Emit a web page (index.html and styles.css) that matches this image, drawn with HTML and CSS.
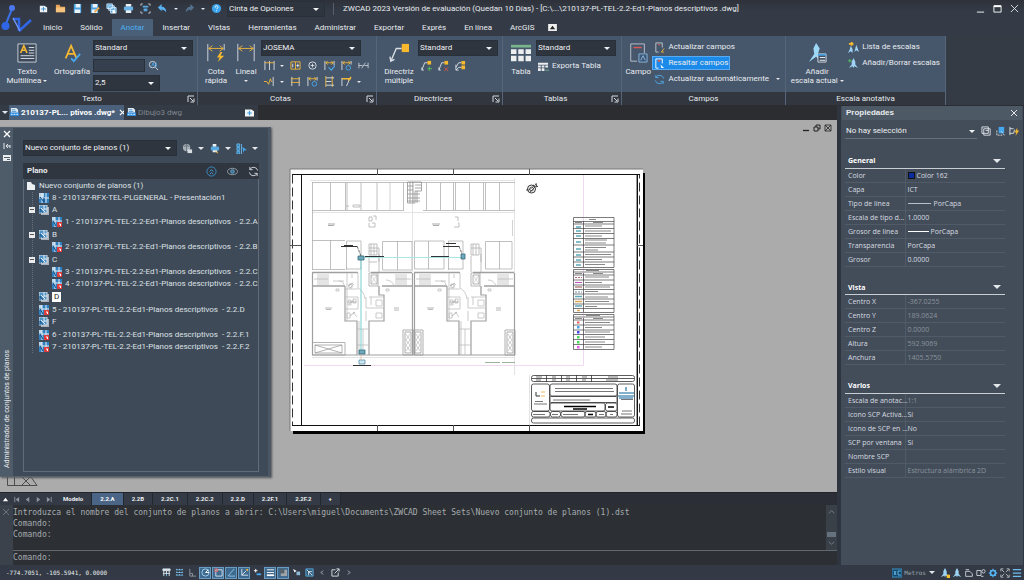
FILE: index.html
```html
<!DOCTYPE html>
<html lang="es">
<head>
<meta charset="utf-8">
<title>ZWCAD 2023</title>
<link rel="stylesheet" href="styles.css">
</head>
<body>
<svg class="defs" aria-hidden="true">
  <defs>
    <symbol id="launch" viewBox="0 0 8 8"><path d="M1 7V1H7M3 3L6 6M7 3.500V7H3.500" fill="none" stroke="#d5dae0"/></symbol>
    <symbol id="sheet" viewBox="0 0 10 10"><rect width="10" height="10" fill="#2f80c0"/><path d="M0 0H5V4H0Z" fill="#bcd7ea"/><path d="M3 0V10M7 0V10M0 5H10" stroke="#e6edf3"/><path d="M1 4L5 9V5" fill="none" stroke="#124a80"/></symbol>
    <symbol id="sheetlock" viewBox="0 0 10 10"><rect width="10" height="10" fill="#2f80c0"/><path d="M0 0H3V3H0Z" fill="#bcd7ea"/><path d="M3 0V10M7 0V5M0 4H10" stroke="#e6edf3"/><path d="M1 4L4 9" stroke="#124a80"/><rect x="5" y="5" width="5" height="5" fill="#e03c3c"/><path d="M7 7H8.500V9" fill="none" stroke="#fff"/></symbol>
    <symbol id="subset" viewBox="0 0 10 10"><path d="M2 2H10V10H2Z" fill="#aab3bd"/><path d="M0 0H8V8H0Z" fill="#4f93c7" stroke="#d5dde4"/><path d="M5 0V5M2 3L6 7M5 4H8" stroke="#e8eef3" fill="none"/><path d="M1 8V4L4 8" fill="none" stroke="#17588f"/></symbol>
    <symbol id="dwg" viewBox="0 0 10 10"><path d="M1 0H7L9 2V7H1Z" fill="#dfeaf3"/><path d="M2 2H6M2 4H7" stroke="#4b94ce"/><rect y="5" width="10" height="4" rx="1" fill="#2d8be0"/><path d="M1 7H3M4 7H6M7 7H9" stroke="#fff"/></symbol>
    <symbol id="dimfix" viewBox="0 0 12 12"><path d="M1 1V11M11 1V5" stroke="#d9dee4"/><path d="M2 3H10M4 1L2 3L4 5M8 1L10 3L8 5" fill="none" stroke="#f0b73a"/><circle cx="8" cy="8.500" r="2.500" fill="none" stroke="#4aa9ea"/></symbol>
    <symbol id="leader" viewBox="0 0 12 12"><path d="M1 11L4 3H7M1 8V11H3" fill="none" stroke="#d9dee4"/><rect x="7" y="1" width="4" height="4" fill="#f6b82c"/></symbol>
    <symbol id="scale" viewBox="0 0 12 12"><path d="M6 0L8 4V7L11 11L7 9L6 11L5 9L1 11L4 7V4Z" fill="#9ed3f3"/></symbol>
    <symbol id="refresh" viewBox="0 0 12 12"><path d="M10.500 5A4.500 4.500 0 0 0 2 4M1.500 7A4.500 4.500 0 0 0 10 8M2 1V4H5M10 11V8H7" fill="none" stroke="currentColor"/></symbol>
    <g id="flat" fill="none" stroke="#b4b4b4" stroke-width=".7">
      <path d="M312 272.500H358M371 272.500H412M312 286H345M382 286H412" stroke="#a0a0a0" stroke-width="1.400"/>
      <path d="M312.500 273V355M345 286V321H357V355M369 355V321H384V295H379V286M412.500 273V355H312" stroke="#a0a0a0" stroke-width="1.200"/>
      <path d="M318 274V285M320 274V285M322 274V285M324 274V285M326 274V285M328 274V285M314 279H328M396 274V285M398 274V285M400 274V285M402 274V285M404 274V285M406 274V285M396 279H411M333 281H344"/>
      <path d="M347 273V321M358 273V288M345 289H358M345 297H358M345 309H358M358 297V309M369 297H384M366 297V308H384M366 311V321M352 274V278M354 284L350 288M354 300L349 304M353 312L357 317M358 288Q364 291 365 299M371 297V305M376 300H382V306H376ZM376 313H382V318H376Z"/>
      <path d="M369 273H378V286H369ZM371 275H377V284H371Z" stroke="#999"/>
      <path d="M371 275L377 284M377 275L371 284" stroke-width=".5"/>
      <path d="M379 286V295M386 280Q392 280 394 286M339 281Q344 281 344 286M336 289H339V291H336ZM386 289H389V291H386Z"/>
      <path d="M349 284H352V288H349ZM348 300H351V305H348ZM353 299H356V303H353ZM347 313H350V318H347Z"/>
      <path d="M348 286L353 283M348 302L356 302M350 316L355 312" stroke="#999"/>
      <path d="M325 308H332M326 309.500H331M394 308H399M394 310H399" stroke="#888" stroke-width=".6"/>
      <path d="M357 329H368M363 329V355M357 345H369M359 321V355"/>
    </g>
    <g id="lift" fill="none" stroke="#9a9a9a" stroke-width=".8"><path d="M403 330H413V355H403ZM405 332H411V353H405Z"/><path d="M406 334L410 340L406 345L410 351M410 334L406 340L410 345L406 351" stroke-width=".5"/></g>
  </defs>
</svg>

<div class="app">
  <header class="top">
    <svg class="logo" viewBox="0 0 34 36" role="img" aria-label="ZWCAD"><path d="M12 9L5 26" stroke="#3b6fe6" stroke-width="2"/><circle cx="12" cy="8" r="3" fill="#4b78ee"/><circle cx="5.500" cy="26" r="4" fill="#2f66e8"/><path d="M13 19H19V31M19 31L31 20" fill="none" stroke="#2f66e8" stroke-width="2.500"/><path d="M13 18L20 31" stroke="#6d96f5" stroke-width="1.500"/></svg>
    <div class="toprows">
      <div class="quick">
        <button class="q" aria-label="Nuevo"><svg viewBox="0 0 12 12"><path d="M2 3H7L10 5V10H2Z" fill="#eef2f5"/><path d="M6 4V9M3.500 6.500H8.500" stroke="#3a8bd0"/></svg></button>
        <button class="q" aria-label="Abrir"><svg viewBox="0 0 12 12"><path d="M1 2H5L6 4H11V10H1Z" fill="#e8a45a"/><path d="M1 5H11V10H1Z" fill="#f5c37e"/></svg></button>
        <button class="q" aria-label="Guardar"><svg viewBox="0 0 12 12"><path d="M2 1H10V11H2Z" fill="#4ba3e2"/><path d="M4 1H9V5H4ZM3 7H9V11H3Z" fill="#eaf3fa"/></svg></button>
        <button class="q" aria-label="Guardar como"><svg viewBox="0 0 12 12"><path d="M2 1H10V11H2Z" fill="#4ba3e2"/><path d="M4 1H9V5H4ZM3 7H9V11H3Z" fill="#eaf3fa"/><path d="M6 10L11 5" stroke="#f0a94b" stroke-width="2"/></svg></button>
        <button class="q" aria-label="Guardar todo"><svg viewBox="0 0 12 12"><path d="M1 1H7V6H1ZM3 3H9V8H3ZM5 5H11V11H5Z" fill="#4b9edb" stroke="#cfe6f7"/><path d="M7 8H10V11H7Z" fill="#fff"/></svg></button>
        <button class="q" aria-label="Imprimir"><svg viewBox="0 0 12 12"><path d="M3 1H9V4H3ZM3 7H9V11H3Z" fill="#e8f0f6"/><path d="M1 4H11V8H1Z" fill="#68b2e8"/></svg></button>
        <button class="q" aria-label="Vista previa"><svg viewBox="0 0 12 12"><path d="M1 3V1H3M9 1H11V3M11 9V11H9M3 11H1V9" fill="none" stroke="#c5ccd3"/><path d="M3 3H9V5H3ZM4 6H8V9H4Z" fill="#5aa7df"/></svg></button>
        <button class="q" aria-label="Deshacer"><svg viewBox="0 0 12 12"><path d="M1 5L5 1V4Q10 4 10 10Q8 7 5 7V9Z" fill="#58b0ef"/></svg></button>
        <i class="caret"></i>
        <button class="q" aria-label="Rehacer"><svg viewBox="0 0 12 12"><path d="M11 5L7 1V4Q2 4 2 10Q4 7 7 7V9Z" fill="#53718c"/></svg></button>
        <i class="caret"></i>
        <button class="q" aria-label="Ayuda"><svg viewBox="0 0 12 12"><circle cx="6" cy="6" r="5" fill="#3ba4ee"/><path d="M4.500 5Q4.500 3 6 3T7.500 5Q7.500 6 6 6.500M6 8V9" fill="none" stroke="#fff"/></svg></button>
        <span class="pick w-ws"><select aria-label="Espacio de trabajo"><option>Cinta de Opciones</option></select></span>
        <i class="bar"></i>
        <h1 class="title">ZWCAD 2023 Versión de evaluación (Quedan 10 Días) - [C:\...\210137-PL-TEL-2.2-Ed1-Planos descriptivos .dwg]</h1>
        <button class="win" aria-label="Minimizar"><svg viewBox="0 0 10 10"><path d="M1 9H9" stroke="#fff"/></svg></button>
        <button class="win" aria-label="Maximizar"><svg viewBox="0 0 10 10"><path d="M1 2H9V9H1Z" fill="none" stroke="#fff"/><path d="M1 2.500H9" stroke="#fff" stroke-width="2"/></svg></button>
        <button class="win" aria-label="Cerrar"><svg viewBox="0 0 10 10"><path d="M1 1L9 9M9 1L1 9" stroke="#e4e7ea"/></svg></button>
      </div>
      <nav class="tabs">
        <a href="#">Inicio</a><a href="#">Sólido</a><a href="#" class="on">Anotar</a><a href="#">Insertar</a><a href="#">Vistas</a><a href="#">Herramientas</a><a href="#">Administrar</a><a href="#">Exportar</a><a href="#">Exprés</a><a href="#">En línea</a><a href="#">ArcGIS</a>
        <button class="fold" aria-label="Contraer"><svg viewBox="0 0 10 8"><path d="M0 0H10V8H0Z" fill="#eee"/><path d="M2 6L5 2L8 6Z" fill="#222"/></svg></button>
      </nav>
    </div>
  </header>

  <section class="ribbon">
    <div class="panel p-text">
      <div class="pbody">
        <button class="big b-multi"><svg viewBox="0 0 22 22"><path d="M1 1H21V21H1Z" fill="#3b4859" stroke="#cfd5db"/><path d="M4 11L7.500 3L11 11M5 8H10" fill="none" stroke="#f2b733" stroke-width="1.800"/><path d="M13 5H19M13 8H19M13 11H19M4 14H19M4 17H19" stroke="#e6eaee"/></svg>Texto<br>Multilínea <i class="caret sm"></i></button>
        <button class="big b-orto"><svg viewBox="0 0 22 22"><path d="M4 17L10 3L16 17M6 12H14" fill="none" stroke="#f2b733" stroke-width="2"/><path d="M10 17L13 20L20 12" fill="none" stroke="#45a8ef" stroke-width="2"/></svg>Ortografía</button>
        <div class="stack">
          <span class="pick w-wide"><select aria-label="Estilo de texto"><option>Standard</option></select></span>
          <span class="find"><input aria-label="Buscar texto"><button class="mini" aria-label="Buscar"><svg viewBox="0 0 12 12"><circle cx="5" cy="5" r="3.500" fill="none" stroke="#d5dde4"/><path d="M8 8L11 11" stroke="#d5dde4"/><path d="M4 7L5.500 3L7 7M9 3V8" fill="none" stroke="#45a8ef"/></svg></button></span>
          <span class="pick w-mid"><select aria-label="Altura"><option>2,5</option></select></span>
        </div>
      </div>
      <div class="pfoot"><span>Texto</span><button aria-label="Opciones de texto"><svg><use href="#launch"/></svg></button></div>
    </div>
    <div class="panel p-cotas">
      <div class="pbody">
        <button class="big b-sm"><svg viewBox="0 0 22 22"><path d="M2 1V20M20 1V8" stroke="#d9dee4"/><path d="M3 6H19M7 3L3 6L7 9M15 3L19 6L15 9" fill="none" stroke="#f0b73a"/><path d="M16 10L12 16H15L13 21L20 14H16L18 10Z" fill="#f6b82c"/></svg>Cota<br>rápida</button>
        <button class="big b-sm"><svg viewBox="0 0 22 22"><path d="M2 1V20M20 1V20" stroke="#d9dee4"/><path d="M3 6H19M7 3L3 6L7 9M15 3L19 6L15 9" fill="none" stroke="#f0b73a"/></svg>Lineal<br><i class="caret sm"></i></button>
        <div class="stack">
          <span class="pick w-wide"><select aria-label="Estilo de cota"><option>JOSEMA</option></select></span>
          <span class="tools">
            <button class="mini" aria-label="Continua"><svg viewBox="0 0 12 12"><path d="M1 1V11M6 1V11M11 1V11" stroke="#d9dee4"/><path d="M1 3H11" stroke="#f0b73a"/></svg></button><i class="caret sm"></i>
            <button class="mini" aria-label="Tolerancia"><svg viewBox="0 0 12 12"><path d="M1 2H11V10H1ZM6 2V10" fill="none" stroke="#f0b73a"/><path d="M3 4V8M7 6H10M8.500 4V8" stroke="#e3e7eb"/></svg></button>
            <button class="mini" aria-label="Marca de centro"><svg viewBox="0 0 12 12"><circle cx="6" cy="6" r="4" fill="none" stroke="#d9dee4"/><path d="M4 6H8M6 4V8" stroke="#d9dee4"/></svg></button>
            <button class="mini" aria-label="Inspección"><svg viewBox="0 0 12 12"><path d="M1 1V11M11 1V6" stroke="#d9dee4"/><path d="M2 3H10M4 1L2 3L4 5M8 1L10 3L8 5" fill="none" stroke="#f0b73a"/><path d="M5 8L8 11L12 6" fill="none" stroke="#4aa9ea" stroke-width="1.300"/></svg></button>
            <button class="mini" aria-label="Actualizar"><svg><use href="#dimfix"/></svg></button>
            <button class="mini" aria-label="Corte"><svg viewBox="0 0 12 12"><path d="M1 3V9M11 3V9M1 6H5M7 6H11M4 9L8 3" stroke="#c4cad1"/></svg></button>
          </span>
          <span class="tools">
            <button class="mini" aria-label="Recodo"><svg viewBox="0 0 12 12"><path d="M0 6H3L5 9L7 3L8 6H9" fill="none" stroke="#f0b73a"/><path d="M10 1V11" stroke="#d9dee4"/></svg></button><i class="caret sm"></i>
            <button class="mini" aria-label="Espaciar"><svg viewBox="0 0 12 12"><path d="M2 1V11M10 1V11" stroke="#d9dee4"/><path d="M1 3H11M1 7H11" stroke="#f0b73a"/></svg></button>
            <button class="mini" aria-label="Girar texto"><svg><use href="#dimfix"/></svg></button>
            <button class="mini" aria-label="Justificar"><svg viewBox="0 0 12 12"><path d="M2 0V12M9 0V12" stroke="#f0b73a"/><path d="M2 2H11M2 6H8M2 10H11" stroke="#d9dee4"/></svg></button>
            <button class="mini" aria-label="Oblicua"><svg viewBox="0 0 12 12"><path d="M1 11V2M6 11L10 2" stroke="#d9dee4"/><path d="M1 3H11M8 5L11 1" stroke="#f0b73a" stroke-width="1.500"/></svg></button><i class="caret sm"></i>
          </span>
        </div>
      </div>
      <div class="pfoot"><span>Cotas</span><button aria-label="Opciones de cotas"><svg><use href="#launch"/></svg></button></div>
    </div>
    <div class="panel p-dir">
      <div class="pbody">
        <button class="big b-dir"><svg viewBox="0 0 22 22"><path d="M2 20L8 6H14M1 15L2 20L6 18" fill="none" stroke="#d9dee4" stroke-width="1.500"/><path d="M14 1H22V10H14Z" fill="#f6b82c"/></svg>Directriz<br>múltiple</button>
        <div class="stack">
          <span class="pick w-dir"><select aria-label="Estilo de directriz"><option>Standard</option></select></span>
          <span class="tools">
            <button class="mini" aria-label="Añadir directriz"><svg viewBox="0 0 12 12"><use href="#leader"/><path d="M9 7V12M7 9.500H12" stroke="#55c25b"/></svg></button>
            <button class="mini" aria-label="Eliminar directriz"><svg viewBox="0 0 12 12"><use href="#leader"/><path d="M7 8L11 12M11 8L7 12" stroke="#d95745"/></svg></button>
            <button class="mini" aria-label="Alinear directrices"><svg viewBox="0 0 12 12"><path d="M1 8L4 3H7M1 11L4 8H7M1 5V11H4" fill="none" stroke="#d9dee4"/><path d="M7 1H11V5H7ZM7 6H11V10H7Z" fill="#f6b82c"/></svg></button>
          </span>
        </div>
      </div>
      <div class="pfoot"><span>Directrices</span><button aria-label="Opciones de directrices"><svg><use href="#launch"/></svg></button></div>
    </div>
    <div class="panel p-tab">
      <div class="pbody">
        <button class="big b-tab"><svg viewBox="0 0 22 22"><path d="M0 2H22V5H0Z" fill="#78b58b"/><path d="M0 7H6V12H0ZM8 7H14V12H8ZM16 7H22V12H16ZM0 14H6V20H0ZM8 14H14V20H8ZM16 14H22V20H16Z" fill="#eceef0"/></svg>Tabla</button>
        <div class="stack">
          <span class="pick w-dir"><select aria-label="Estilo de tabla"><option>Standard</option></select></span>
          <button class="line"><svg viewBox="0 0 12 12"><path d="M0 2H11V4H0ZM0 5H3V7H0ZM4 5H7V7H4ZM8 5H11V7H8ZM0 8H3V11H0ZM4 8H7V11H4Z" fill="#eceef0"/><path d="M8 10H12" stroke="#78b58b"/></svg>Exporta Tabla</button>
        </div>
      </div>
      <div class="pfoot"><span>Tablas</span><button aria-label="Opciones de tablas"><svg><use href="#launch"/></svg></button></div>
    </div>
    <div class="panel p-campo">
      <div class="pbody">
        <button class="big b-campo"><svg viewBox="0 0 22 22"><path d="M10 20H3V1H18V11" fill="none" stroke="#c0c7cf"/><path d="M6 5H15" stroke="#e05a55" stroke-width="1.500"/><path d="M12 12H21V21H12Z" fill="#3d5878" stroke="#8eb9dc"/><path d="M14 19L16.500 14L19 19" fill="none" stroke="#8eb9dc"/></svg>Campo</button>
        <div class="stack lines">
          <button class="line"><svg viewBox="0 0 12 12"><path d="M5 11H2V1H9V6" fill="none" stroke="#c0c7cf"/><path d="M4 3H7" stroke="#e05a55"/><path d="M11 7L8 11H11" fill="none" stroke="#f0b73a"/></svg>Actualizar campos</button>
          <button class="line hot"><svg viewBox="0 0 12 12"><path d="M5 11H2V1H9V6" fill="none" stroke="#fff"/><path d="M4 3H7" stroke="#e05a55" stroke-width="2"/><path d="M7 7L11 11H8Z" fill="#fff"/></svg>Resaltar campos</button>
          <button class="line blue"><svg><use href="#refresh"/></svg><span>Actualizar automáticamente</span><i class="caret"></i></button>
        </div>
      </div>
      <div class="pfoot"><span>Campos</span></div>
    </div>
    <div class="panel p-esc">
      <div class="pbody">
        <button class="big b-esc"><svg viewBox="0 0 22 22"><path d="M10 0L14 6L12 12L15 20L10 15L2 21L8 12L7 6Z" fill="#9ed8f7"/><path d="M12 12H21V21H12Z" fill="#405063" stroke="#d9dee4"/><path d="M12 13H21" stroke="#4ba3e2" stroke-width="2"/><path d="M14 16H20M14 19H20" stroke="#fff"/></svg>Añadir<br>escala actual <i class="caret sm"></i></button>
        <div class="stack lines">
          <button class="line"><svg viewBox="0 0 12 12"><path d="M3 4L5 8V12L3 10L0 12L2 8ZM9 3L12 11L9 9L7 11Z" fill="#9ed3f3"/><path d="M1 2H6M4 0V4" stroke="#f6b82c" stroke-width="2"/></svg>Lista de escalas</button>
          <button class="line"><svg viewBox="0 0 12 12"><use href="#scale"/><path d="M0 3H4M2 1V5" stroke="#55c25b"/></svg>Añadir/Borrar escalas</button>
        </div>
      </div>
      <div class="pfoot"><span>Escala anotativa</span></div>
    </div>
  </section>

  <main class="work">
    <div class="left">
      <div class="docs">
        <button class="docmenu" aria-label="Lista de dibujos"><i class="caret"></i></button>
        <div class="doc on"><svg><use href="#dwg"/></svg><span>210137-PL... ptivos .dwg*</span><button aria-label="Cerrar dibujo"><svg viewBox="0 0 8 8"><path d="M1 1L7 7M7 1L1 7" stroke="#fff" stroke-width="1.300"/></svg></button></div>
        <div class="doc"><svg><use href="#dwg"/></svg><span>Dibujo3 dwg</span></div>
        <button class="docnew" aria-label="Nuevo dibujo"><svg viewBox="0 0 10 8"><path d="M0 0H7L10 2V8H0Z" fill="#f2f5f8"/><path d="M5 1.500V6.500M2.500 4H7.500" stroke="#3a9ae6" stroke-width="1.300"/></svg></button>
      </div>

      <div class="canvas">
        <svg class="drawing" viewBox="0 120 837 372" preserveAspectRatio="xMinYMin meet" role="img" aria-label="Plano 2.2.A">
          <path d="M293 173H645V434H293Z" fill="#000"/>
          <path d="M290 169H643V431H290Z" fill="#fff"/>
          <path d="M290 431V169H643" fill="none" stroke="#777"/>
          <path d="M292.500 174.500V425.500H639.500V174.500Z" fill="none" stroke="#333" stroke-dasharray="9 4"/>
          <path d="M301.500 174.500H637.500V425.500H301.500Z" fill="none" stroke="#111"/>
          <path d="M292 174.500H640M292 425.500H640" stroke="#111"/>
          <path d="M377.500 169V175M453.500 169V175M529.500 169V175M290 245.500H301M637 245.500H643M377.500 425V431M453.500 425V431M529.500 425V431" stroke="#555"/>
          <path d="M636.500 175V425" stroke="#999"/>
          <path d="M304 365.500H583.500V175" fill="none" stroke="#f0daf0"/>
          <path d="M514.500 178V375M412.500 180V272M310 180.500H515M312 212.500H515M312 357.500H515M529.500 375V425" fill="none" stroke="#e4e4e4"/>
          <g fill="none" stroke="#b0b0b0" stroke-width=".8">
            <path d="M312.500 182V270M312 182.500H515M312 210.500H404M423 210.500H515M330.500 183V210M345.500 183V210M347 183V210M361 183V210M377 183V210M403.500 183V210M426.500 183V210M440.500 183V210M453.500 183V210M455.500 183V210M469.500 183V210M483.500 183V210M485.500 183V210M499.500 183V210"/>
            <path d="M390 183V210M512.500 220V236" stroke="#c8c8c8"/>
            <path d="M312 240.500H345M312 269.500H345M330.500 240V269M346.500 270V241H361V269H346M382.500 241.500H412M382.500 241.500V270H412V241M397.500 241V270M414.500 241H444V269H414.500ZM428.500 241V269M448.500 270V241H463V269H448M485.500 241.500H512V269H485.500ZM499.500 241V269"/>
            <path d="M407.500 182H421.500V191H415V203H407.500ZM410 182V203M413 182V203M415 185H421M415 188H421M407 186H413M407 190H413M407 194H420M407 198H420M407 201H420M417 191V203" stroke="#929292"/>
            <path d="M369 244H377V255H369ZM371 244V255M374 244V255M369 248H379V262M369 251H377M369 262H377M471 244H479V255H471ZM473 244V255M476 244V255M471 248H481V262M369 256V272M471 256V272"/>
            <path d="M369 217H372V221H369ZM372 223H375V227H369V223M373 216H376V220M455 217H458V221M458 223H459V227H454M353 205H360V207H353ZM346 206H349"/>
            <path d="M379 254V272M481 254V272"/>
          </g>
          <path d="M328 224H335M328 225.500H334M432 224H440M433 225.500H439" stroke="#888" stroke-width=".7"/>
          <use href="#flat"/><use href="#flat" x="102"/>
          <use href="#lift"/><use href="#lift" x="10"/><use href="#lift" x="102"/>
          <path d="M312.500 342.500H345V355H312.500ZM315 345L342 353M315 353L342 345M315 345H342V353H315Z" fill="none" stroke="#a0a0a0" stroke-width=".8"/>
          <path d="M516 271H526V357H516Z" fill="#fff"/>
          <path d="M361 258V352" stroke="#72cfcb" fill="none"/>
          <path d="M361 257.500H463" stroke="#a9e6e4"/>
          <path d="M358 256H364V260H358ZM461 254H465V259H461ZM359 350H365V354H359Z" fill="#6fa8ba" stroke="#396a7e" stroke-width=".8"/>
          <path d="M359 360H365V364H359Z" fill="#cce6f0" stroke="#5b8fa5" stroke-width=".8"/>
          <path d="M361 360V355" stroke="#e4a58a" stroke-width=".6"/>
          <path d="M341 246.500H357M365 256.500H384M431 256.500H449M443 246.500H459M446 243.500H456M344 245.500H353M353 365.500H371" fill="none" stroke="#333"/>
          <path d="M357 246L361 256M459 246L462 254" stroke="#444" stroke-width=".8" stroke-dasharray="3 1"/>
          <path d="M485 362.500H500M502 362.500H515" stroke="#9cb29c"/>
          <g fill="none" stroke="#333"><circle cx="531.500" cy="189" r="4"/><circle cx="531.500" cy="189" r="2" stroke-width=".7"/><path d="M526 190H529L534 186M530 192L535 187M535 184L538 187M536 183L537 187L533 185" stroke-width=".8"/></g>

          <g fill="none" stroke="#444" stroke-width=".7">
            <path d="M573.500 217.500H614V267.500H573.500ZM573.500 269.500H614V312.500H573.500ZM573.500 314.500H614V349.500H573.500ZM583.500 221V267M583.500 273V312M583.500 318V349"/>
            <path d="M573 221.500H614M573 224H614M573 228.500H614M573 233.500H614M573 238.500H614M573 245H614M573 252H614M573 257H614M573 262H614M573 272H614M573 275H614M573 280H614M573 285H614M573 289.500H614M573 294H614M573 299H614M573 304H614M573 308.500H614M573 317H614M573 320H614M573 325H614M573 330H614M573 334.500H614M573 339.500H614M573 344.500H614"/>
          </g>
          <path d="M589 219.500H596M575 222.500H582M593 222.500H603M585 226H602M585 231H611M585 236H602M585 240H607M585 243H606M585 247.500H606M585 250H598M585 254.500H611M585 259.500H602M585 264.500H605M586 270.500H599M575 273.500H582M593 273.500H603M585 277H609M585 282.500H602M585 287H610M585 291.500H598M585 297H608M585 301.500H609M585 306.500H597M586 315.500H600M575 318.500H582M593 318.500H603M585 322.500H610M585 327.500H602M585 332H610M585 337H605M585 342H605M585 347H602" stroke="#888" stroke-width="1.200"/>
          <path d="M576 227H581M576 231H581M576 236H581M576 242H581M576 249H581M576 255H581M576 260H581M576 265H581M575 296.500H582M575 306H582" stroke="#5ea9b6" stroke-width="1.500"/>
          <path d="M575 277.500H582" stroke="#b56a72" stroke-dasharray="2 1"/><path d="M575 282.500H582" stroke="#c44dc4"/><path d="M575 287H582" stroke="#914949"/><path d="M575 292H582" stroke="#718aab" stroke-dasharray="2 1"/><path d="M575 301.500H582M577 310.500H580" stroke="#dda852" stroke-width="1.500"/>
          <path d="M577 321.500H579.500V323.500H577Z" fill="#ec5d68"/><path d="M577 326H579.500V328.500H577Z" fill="#45a6e8"/><path d="M577 331H579.500V333.500H577Z" fill="#4248ed"/><path d="M577 336H579.500V338.500H577ZM577 341H579.500V343.500H577Z" fill="#4ed85f"/><path d="M577 346H579.500V348.500H577Z" fill="#e85ae8"/>

          <g fill="none" stroke="#333" stroke-width=".8">
            <rect x="531.500" y="375.500" width="103" height="6" rx="2"/><path d="M546.500 375V382M561.500 375V382M576.500 375V382M591.500 375V382M532 378.500H634"/>
            <rect x="531.500" y="384" width="18" height="27" rx="2"/><rect x="550" y="384" width="67" height="12" rx="2"/><rect x="550" y="396.500" width="67" height="6" rx="1"/><rect x="550" y="403" width="55" height="8" rx="2"/><rect x="605.500" y="403" width="11.500" height="8" rx="2"/><rect x="617.500" y="384" width="17" height="33" rx="2"/>
            <rect x="531.500" y="411.500" width="18.500" height="5.500" rx="2"/><rect x="550.500" y="411.500" width="10" height="5.500" rx="2"/><rect x="561" y="411.500" width="24" height="5.500" rx="2"/><rect x="585" y="411.500" width="11" height="5.500" rx="2"/><rect x="596" y="411.500" width="10" height="5.500" rx="2"/><rect x="606" y="411.500" width="11" height="5.500" rx="2"/><rect x="531.500" y="418" width="103" height="5" rx="2"/>
          </g>
          <path d="M555 388.500H613M555 391.500H614M553 400H590M535 401.500H543M534 404H547M533 414.500H545M552 414.500H558M563 414.500H578M599 414.500H604M610 414.500H613M536 377H542M552 377H556M566 377H570M582 377H587M608 377H618M536 380H541M552 380H556M566 380H570M582 380H586M606 380H618M622 411H632M621 414H632M621 399.500H633" stroke="#777"/>
          <path d="M564 406.500H596M573 409H587M608 407H614M588 414.500H593" stroke="#000" stroke-width="1.500"/>
          <path d="M536 392V396H540" fill="none" stroke="#333"/><path d="M541 392H545M541 396H545" stroke="#efb95e"/>
          <path d="M619 393H634M618 396H634M619 398H633M626 387V391" stroke="#5b96bc" stroke-width="1.600"/>
          <path d="M7.500 477V485.500H37L31 477M14.500 477V485M22 477L30 485M30 477L22 485" fill="none" stroke="#333" stroke-width=".8"/>
        </svg>
        <div class="mdi">
          <button aria-label="Minimizar plano"><svg viewBox="0 0 8 8"><path d="M1 6.500H7" stroke="#222" stroke-width="1.300"/></svg></button>
          <button aria-label="Restaurar plano"><svg viewBox="0 0 8 8"><path d="M1 3H5V7H1ZM3 3V1H7V5H5" fill="none" stroke="#222"/></svg></button>
          <button aria-label="Cerrar plano"><svg viewBox="0 0 8 8"><path d="M1 1L7 7M7 1L1 7M1 1H7V7H1Z" stroke="#222" fill="none" stroke-width=".8"/></svg></button>
        </div>

        <aside class="sheets">
          <div class="grip">
            <button aria-label="Cerrar"><svg viewBox="0 0 8 8"><path d="M1 1L7 7M7 1L1 7" stroke="#fff" stroke-width="1.300"/></svg></button>
            <button aria-label="Ocultar automáticamente"><svg viewBox="0 0 8 8"><path d="M1 1V7M3 4H7M5 2L3 4L5 6M7 3V6" fill="none" stroke="#e2e6ea"/></svg></button>
            <button aria-label="Propiedades"><svg viewBox="0 0 8 8"><path d="M0 1H8V7H0Z" fill="#e9ecef"/><path d="M1 3.500H7M4 5.500H7" stroke="#4d5b6a"/></svg></button>
            <span>Administrador de conjuntos de planos</span>
          </div>
          <div class="sbody">
            <div class="sbar">
              <span class="pick grow"><select aria-label="Conjunto de planos"><option>Nuevo conjunto de planos (1)</option></select></span>
              <button class="mini" aria-label="Publicar"><svg viewBox="0 0 12 12"><circle cx="5" cy="5" r="4" fill="#a9b2bb"/><path d="M2 4Q5 1 8 4M5 1V9" stroke="#65707b" fill="none"/><path d="M6 7H11V11H6Z" fill="#d8dde1"/></svg></button><i class="caret"></i>
              <button class="mini" aria-label="Imprimir planos"><svg viewBox="0 0 12 12"><path d="M4 1H8V4H4ZM4 7H9V10H4Z" fill="#e8f0f6"/><path d="M2 4H11V8H2Z" fill="#58a9e0"/><path d="M7 9L10 11" stroke="#f0b73a"/></svg></button><i class="caret"></i>
              <button class="mini" aria-label="Selecciones"><svg viewBox="0 0 12 12"><path d="M1 1H4V4H1ZM1 5H4V8H1ZM1 9H4V12H1ZM6 1V12" fill="#2d7fb8" stroke="#69b6e8"/><path d="M7 4L12 8L9 8L8 11Z" fill="#45a8ef"/></svg></button><i class="caret"></i>
            </div>
            <div class="shead"><h2>Plano</h2>
              <button class="mini" aria-label="Contraer todo"><svg viewBox="0 0 12 12"><circle cx="6" cy="6" r="5" fill="none" stroke="#3c8fc7"/><path d="M4 6L6 4L8 6M4 9L6 7L8 9" fill="none" stroke="#4aa3dc"/></svg></button>
              <button class="mini" aria-label="Detalles"><svg viewBox="0 0 12 12"><ellipse cx="6" cy="6" rx="5.500" ry="3.500" fill="none" stroke="#9ba5af"/><circle cx="6" cy="6" r="2" fill="#3c7396" stroke="#6ba7ca"/></svg></button>
              <button class="mini wh" aria-label="Actualizar lista"><svg><use href="#refresh"/></svg></button>
            </div>
            <div class="tree">
              <div class="row root"><svg viewBox="0 0 10 10"><path d="M1 1H5L6 3L9 4V9H1Z" fill="#eef1f3"/></svg>Nuevo conjunto de planos (1)</div>
              <ul>
                <li><div class="row"><svg><use href="#sheet"/></svg>8 - 210137-RFX-TEL-PLGENERAL - Presentación1</div></li>
                <li class="grp open"><div class="row"><svg><use href="#subset"/></svg>A</div>
                  <ul><li><div class="row"><svg><use href="#sheetlock"/></svg>1 - 210137-PL-TEL-2.2-Ed1-Planos descriptivos &nbsp;- 2.2.A</div></li></ul></li>
                <li class="grp open"><div class="row"><svg><use href="#subset"/></svg>B</div>
                  <ul><li><div class="row"><svg><use href="#sheetlock"/></svg>2 - 210137-PL-TEL-2.2-Ed1-Planos descriptivos &nbsp;- 2.2.B</div></li></ul></li>
                <li class="grp open"><div class="row"><svg><use href="#subset"/></svg>C</div>
                  <ul><li><div class="row"><svg><use href="#sheetlock"/></svg>3 - 210137-PL-TEL-2.2-Ed1-Planos descriptivos &nbsp;- 2.2.C.1</div></li>
                  <li><div class="row"><svg><use href="#sheetlock"/></svg>4 - 210137-PL-TEL-2.2-Ed1-Planos descriptivos &nbsp;- 2.2.C.2</div></li></ul></li>
                <li class="grp"><div class="row"><svg><use href="#subset"/></svg><mark>D</mark></div></li>
                <li><div class="row"><svg><use href="#sheetlock"/></svg>5 - 210137-PL-TEL-2.2-Ed1-Planos descriptivos &nbsp;- 2.2.D</div></li>
                <li class="grp"><div class="row"><svg><use href="#subset"/></svg>F</div></li>
                <li><div class="row"><svg><use href="#sheetlock"/></svg>6 - 210137-PL-TEL-2.2-Ed1-Planos descriptivos &nbsp;- 2.2.F.1</div></li>
                <li><div class="row"><svg><use href="#sheetlock"/></svg>7 - 210137-PL-TEL-2.2-Ed1-Planos descriptivos &nbsp;- 2.2.F.2</div></li>
              </ul>
            </div>
          </div>
        </aside>
      </div>

      <nav class="layouts">
        <button class="nav" aria-label="Lista"><svg viewBox="0 0 8 8"><path d="M1 6L4 2L7 6Z" fill="#fff"/></svg></button>
        <button class="nav" aria-label="Primero"><svg viewBox="0 0 8 8"><path d="M2 1V7" stroke="#8d959e"/><path d="M7 1V7L3 4Z" fill="#8d959e"/></svg></button>
        <button class="nav" aria-label="Anterior"><svg viewBox="0 0 8 8"><path d="M6 1V7L2 4Z" fill="#8d959e"/></svg></button>
        <button class="nav" aria-label="Siguiente"><svg viewBox="0 0 8 8"><path d="M2 1V7L6 4Z" fill="#8d959e"/></svg></button>
        <button class="nav" aria-label="Último"><svg viewBox="0 0 8 8"><path d="M1 1V7L5 4Z" fill="#8d959e"/><path d="M6 1V7" stroke="#8d959e"/></svg></button>
        <a href="#">Modelo</a><a href="#" class="on">2.2.A</a><a href="#">2.2B</a><a href="#">2.2C.1</a><a href="#">2.2C.2</a><a href="#">2.2.D</a><a href="#">2.2F.1</a><a href="#">2.2F.2</a><a href="#">+</a>
      </nav>

      <section class="cmd">
        <div class="cgrip"><svg viewBox="0 0 8 8"><path d="M1 1L7 7M7 1L1 7" stroke="#69727c"/></svg></div>
        <div class="cmain">
          <div class="clog"><div class="ctext">Introduzca el nombre del conjunto de planos a abrir: C:\Users\miguel\Documents\ZWCAD Sheet Sets\Nuevo conjunto de planos (1).dst<br>Comando:<br>Comando:</div>
            <div class="scroll"><svg viewBox="0 0 8 8"><path d="M1 6L4 3L7 6" fill="none" stroke="#7c858e"/></svg><i></i><svg viewBox="0 0 8 8"><path d="M1 2L4 5L7 2" fill="none" stroke="#7c858e"/></svg></div>
          </div>
          <label class="cline">Comando:<input></label>
        </div>
      </section>
    </div>

    <aside class="props">
      <div class="phead"><h2>Propiedades</h2><button aria-label="Cerrar propiedades"><svg viewBox="0 0 8 8"><path d="M1 1L7 7M7 1L1 7" stroke="#e4e8eb"/></svg></button></div>
      <div class="psel">
        <span class="pick flat"><select aria-label="Selección"><option>No hay selección</option></select></span>
        <button class="mini" aria-label="Alternar selección"><svg viewBox="0 0 12 12"><path d="M1 1H8V8H1ZM3 3H10V10H3ZM5 5H8" fill="none" stroke="#dce1e6"/></svg></button>
        <button class="mini" aria-label="Seleccionar objetos"><svg viewBox="0 0 12 12"><path d="M4 1H10V8H4Z" fill="#45a8ef"/><path d="M2 5V10H8M7 6L11 11" fill="none" stroke="#dce1e6" stroke-dasharray="2 1"/></svg></button>
        <button class="mini" aria-label="Selección rápida"><svg viewBox="0 0 12 12"><path d="M1 1V10M1 3H5M1 8H5L6 4" fill="none" stroke="#dce1e6"/><path d="M9 2L6 7H8L7 11L11 5H9Z" fill="#f6b82c"/></svg></button>
      </div>
      <table class="pt">
        <colgroup><col class="key"><col></colgroup>
        <thead><tr><th colspan="2"><div>General<i class="caret big-c"></i></div></th></tr></thead>
        <tbody>
          <tr><th>Color</th><td><i class="sw"></i>Color 162</td></tr>
          <tr><th>Capa</th><td>ICT</td></tr>
          <tr><th>Tipo de línea</th><td><i class="ln"></i>PorCapa</td></tr>
          <tr><th>Escala de tipo d...</th><td>1.0000</td></tr>
          <tr><th>Grosor de línea</th><td><i class="ln th"></i>PorCapa</td></tr>
          <tr><th>Transparencia</th><td>PorCapa</td></tr>
          <tr><th>Grosor</th><td>0.0000</td></tr>
        </tbody>
      </table>
      <table class="pt">
        <colgroup><col class="key"><col></colgroup>
        <thead><tr><th colspan="2"><div>Vista<i class="caret big-c"></i></div></th></tr></thead>
        <tbody class="dim">
          <tr><th>Centro X</th><td>-367.0255</td></tr>
          <tr><th>Centro Y</th><td>189.0624</td></tr>
          <tr><th>Centro Z</th><td>0.0000</td></tr>
          <tr><th>Altura</th><td>592.9069</td></tr>
          <tr><th>Anchura</th><td>1405.5750</td></tr>
        </tbody>
      </table>
      <table class="pt">
        <colgroup><col class="key"><col></colgroup>
        <thead><tr><th colspan="2"><div>Varios<i class="caret big-c"></i></div></th></tr></thead>
        <tbody>
          <tr class="dim"><th>Escala de anotac...</th><td>1:1</td></tr>
          <tr><th>Icono SCP Activa...</th><td>Sí</td></tr>
          <tr><th>Icono de SCP en ...</th><td>No</td></tr>
          <tr><th>SCP por ventana</th><td>Sí</td></tr>
          <tr><th>Nombre SCP</th><td></td></tr>
          <tr class="dim"><th>Estilo visual</th><td>Estructura alámbrica 2D</td></tr>
        </tbody>
      </table>
    </aside>
  </main>

  <footer class="status">
    <span class="coords">-774.7051, -105.5941, 0.0000</span>
    <div class="toggles">
      <button aria-label="Forzar cursor"><svg viewBox="0 0 10 10"><path d="M1 1H9V3H1ZM2 3V9M5 3V9M8 3V9M1 6H9" stroke="#d9e4ec" fill="#d9e4ec"/><path d="M5 7V9" stroke="#45a8ef"/></svg></button>
      <button aria-label="Rejilla"><svg viewBox="0 0 10 10"><path d="M1 2H9M1 5H9M1 8H9" stroke="#55aeea"/><path d="M2 1V9M5 1V9M8 1V9" stroke="#ccd5dc" stroke-dasharray="1 2"/></svg></button>
      <button aria-label="Orto"><svg viewBox="0 0 10 10"><path d="M2 1V9H9M2 6H5V9" fill="none" stroke="#8e98a3"/></svg></button>
      <button class="on" aria-label="Polar"><svg viewBox="0 0 10 10"><circle cx="5" cy="5" r="4" fill="none" stroke="#a8d3ef"/><path d="M5 5H9M5 5L8 2" stroke="#fff"/></svg></button>
      <button class="on" aria-label="Referencia"><svg viewBox="0 0 10 10"><path d="M2 2H9V9H2Z" fill="none" stroke="#dce7ef"/><path d="M1 1H4V4H1Z" fill="none" stroke="#e36b66"/></svg></button>
      <button class="on" aria-label="Rastreo"><svg viewBox="0 0 10 10"><path d="M1 9L8 1M2 9H9" stroke="#8fcbf1"/></svg></button>
      <button class="on" aria-label="SCP dinámico"><svg viewBox="0 0 10 10"><path d="M2 1V8H9M2 8L7 3" fill="none" stroke="#dce7ef"/><path d="M6 1H9V4Z" fill="#f0b73a"/></svg></button>
      <button aria-label="Entrada dinámica"><svg viewBox="0 0 10 10"><path d="M1 3H5M3 1V5" stroke="#fff"/><path d="M4 7H9" stroke="#45a8ef" stroke-width="2"/></svg></button>
      <button class="on" aria-label="Grosor"><svg viewBox="0 0 10 10"><path d="M1 2H9M1 5H9" stroke="#fff"/><path d="M1 8H9" stroke="#fff" stroke-width="2"/></svg></button>
      <button class="on" aria-label="Transparencia"><svg viewBox="0 0 10 10"><path d="M2 2H9V9H2Z" fill="#a1a5a9"/><path d="M1 1H6V6H1Z" fill="#57626d"/></svg></button>
      <button aria-label="Ciclo"><svg viewBox="0 0 10 10"><path d="M1 1L5 3L3 5Z" fill="#fff"/><path d="M5 4H9V8H5Z" fill="#8eb9d4"/></svg></button>
      <button aria-label="Anotación"><svg viewBox="0 0 10 10"><path d="M1 1H9V9H1Z" fill="#2e5878" stroke="#5eaee0"/><path d="M2 2L8 8M4 4H8M4 4V8" stroke="#dce7ef"/></svg></button>
      <button aria-label="Anterior"><svg viewBox="0 0 10 10"><path d="M6 3L3 5L6 7" fill="none" stroke="#9aa3ac"/></svg></button>
      <button aria-label="Ventana"><svg viewBox="0 0 10 10"><path d="M5 2H1V9H8V5M4 6L9 1M6 1H9V4" fill="none" stroke="#e1e5e8"/></svg></button>
      <button aria-label="Siguiente"><svg viewBox="0 0 10 10"><path d="M4 3L7 5L4 7" fill="none" stroke="#9aa3ac"/></svg></button>
    </div>
    <div class="units">
      <svg viewBox="0 0 10 10"><path d="M0 1H10V9H0Z" fill="#174767" stroke="#3791c7"/><path d="M2 3L4 7M4 3L2 7M9 3H6V7H9" stroke="#5db5e9" fill="none"/></svg>
      <span>Metros</span><i class="caret"></i>
      <button aria-label="Escala de anotación"><svg viewBox="0 0 12 12"><use href="#scale"/><path d="M8 8H12V12H8Z" fill="#f6c32c"/></svg></button>
      <button aria-label="Visibilidad"><svg><use href="#scale"/></svg></button>
      <button aria-label="Bloquear"><svg viewBox="0 0 12 12"><path d="M2 10V4H7L10 7V10ZM2 2H6" fill="none" stroke="#d9dee4"/></svg></button>
      <button aria-label="Aislar"><svg viewBox="0 0 12 12"><path d="M1 3H6V9H1ZM6 10H9" fill="none" stroke="#d9dee4"/><circle cx="9" cy="4" r="2" fill="none" stroke="#d9dee4"/></svg></button>
      <button aria-label="Configuración"><svg viewBox="0 0 12 12"><circle cx="6" cy="6" r="3" fill="none" stroke="#55b4f3" stroke-width="2"/><path d="M6 1V3M6 9V11M1 6H3M9 6H11M2.500 2.500L4 4M8 8L9.500 9.500M9.500 2.500L8 4M4 8L2.500 9.500" stroke="#55b4f3" stroke-width="1.500"/></svg></button>
      <button aria-label="Pantalla completa"><svg viewBox="0 0 12 12"><path d="M1 4V1H4M8 1H11V4M11 8V11H8M4 11H1V8M2 2L5 5M10 2L7 5M10 10L7 7M2 10L5 7" fill="none" stroke="#c5cbd1"/></svg></button>
      <button aria-label="Menú"><svg viewBox="0 0 12 12"><path d="M1 2H11M1 6H11M1 10H11" stroke="#6dbdf0" stroke-width="1.500"/></svg></button>
    </div>
  </footer>
</div>
</body>
</html>
```

FILE: styles.css
```css
* { box-sizing: border-box; }
body { margin: 0; background: #2b2e34; color: #e9ecef; font: 8px/10px Roboto, "Open Sans", sans-serif; }
button { display: inline-flex; align-items: center; justify-content: center; margin: 0; padding: 0; border: 0; background: none; color: inherit; font: inherit; }
a { color: inherit; text-decoration: none; }
svg { display: block; flex: none; }
ul { list-style: none; margin: 0; padding: 0; }
h1, h2 { margin: 0; font: inherit; }
.defs { position: absolute; width: 0; height: 0; }
.app { display: flex; flex-direction: column; min-height: 100vh; }

.caret { flex: none; display: inline-block; border: 3px solid transparent; border-top-color: #e4e7eb; border-bottom: 0; }
.caret.sm { border-width: 2px; border-bottom: 0; vertical-align: middle; }
.mini { width: 12px; height: 12px; flex: none; }
.mini svg { width: 11px; height: 11px; }

.pick { position: relative; display: flex; background: #2f353f; border: 1px solid #29303a; }
.pick::after { content: ""; position: absolute; right: 5px; top: 50%; margin-top: -1px; border: 3px solid transparent; border-top-color: #f0f2f4; border-bottom: 0; pointer-events: none; }
.pick select { appearance: none; width: 100%; height: 14px; padding: 0 12px 0 1px; border: 0; background: none; color: #eef0f2; font: inherit; }
.w-ws { width: 98px; margin-left: 2px; }
.w-wide { width: 100px; }
.w-mid { width: 67px; }
.w-dir { width: 80px; }

.top { display: flex; height: 36px; background: linear-gradient(#2e3139, #343b46 30%); }
.logo { width: 34px; height: 36px; }
.toprows { flex: 1; display: flex; flex-direction: column; }
.quick { display: flex; align-items: center; height: 19px; padding: 0 1px 2px; }
.quick .q { width: 17px; height: 14px; }
.quick .q svg { width: 11px; height: 11px; }
.quick .caret { margin: 0 3px; border-width: 2px; border-bottom: 0; }
.bar { width: 1px; height: 12px; margin: 0 9px 0 8px; background: #59606a; }
.title { flex: 1; white-space: nowrap; }
.win { width: 17px; height: 14px; }
.win svg { width: 9px; height: 9px; }
.tabs { display: flex; height: 17px; }
.tabs a { padding: 4px 9px 0; line-height: 10px; }
.tabs a.on { background: #4a6078; color: #4cb0f5; }
.fold { margin-left: 5px; }
.fold svg { width: 9px; height: 7px; }

.ribbon { display: flex; background: #343b45; }
.panel { border-right: 1px solid #56657a; display: flex; flex-direction: column; }
.p-text { width: 198px; }
.p-cotas { width: 179px; }
.p-dir { width: 126px; }
.p-tab { width: 119px; }
.p-campo { width: 164px; }
.p-esc { width: 160px; }
.pbody { display: flex; align-items: flex-start; height: 56px; padding: 4px 3px 0; background: #46566b; }
.pfoot { display: flex; align-items: center; height: 13px; background: #31363f; }
.pfoot span { flex: 1; text-align: center; }
.pfoot button { width: 13px; height: 12px; }
.pfoot svg { width: 8px; height: 8px; }
.big { display: block; padding-top: 3px; line-height: 9px; text-align: center; white-space: nowrap; }
.big svg { width: 20px; height: 20px; margin: 0 auto 4px; }
.b-multi { width: 48px; }
.b-orto { width: 42px; }
.b-sm { width: 30px; }
.b-dir { width: 38px; }
.b-tab { width: 30px; }
.b-campo { width: 30px; }
.b-esc { width: 58px; }
.stack { display: flex; flex-direction: column; align-items: flex-start; gap: 3px; }
.lines { gap: 2px; margin-left: 1px; }
.find { display: flex; align-items: center; gap: 2px; }
.find input { width: 52px; height: 13px; border: 1px solid #29303a; background: #353f4d; padding: 0 2px; color: inherit; font: inherit; }
.tools { display: flex; align-items: center; gap: 5px; height: 13px; padding-left: 2px; }
.line { gap: 3px; height: 14px; padding: 0 2px; white-space: nowrap; }
.line svg { width: 11px; height: 11px; }
.line.hot { background: #1b8ae8; outline: 1px solid #58aaf2; outline-offset: -1px; }
.line.blue svg { color: #4fa9e6; }
.line .caret { margin-left: 4px; border-width: 2px; border-bottom: 0; }

.work { flex: 1; display: flex; }
.left { flex: 1; min-width: 0; display: flex; flex-direction: column; }
.docs { display: flex; height: 15px; background: #2b2d31; }
.docmenu { width: 9px; background: #343b45; }
.doc { display: flex; align-items: center; gap: 2px; width: 117px; padding: 0 3px; background: #353b44; color: #7f868f; }
.doc > svg { width: 9px; height: 9px; }
.doc.on { width: 115px; padding: 0 1px; background: #4b607b; color: #fff; font-weight: bold; white-space: nowrap; }
.doc button { margin-left: 2px; }
.doc button svg { width: 7px; height: 7px; }
.docnew { width: 17px; background: #353b44; }
.docnew svg { width: 9px; height: 8px; }

.canvas { flex: 1; position: relative; background: #ababab; }
.drawing { width: 100%; height: auto; }
.mdi { position: absolute; top: 4px; right: 5px; display: flex; gap: 3px; }
.mdi svg { width: 8px; height: 8px; }

.sheets { position: absolute; left: 0; top: 7px; width: 271px; height: 350px; display: flex; background: #3f4a58; border: 1px solid #55616e; border-left: 0; border-right: 3px solid #4b5765; box-shadow: 1px 1px 2px #555; }
.grip { width: 13px; display: flex; flex-direction: column; align-items: center; gap: 4px; padding: 2px 0 8px; background: #4e5b69; }
.grip svg { width: 8px; height: 8px; }
.grip span { margin-top: auto; writing-mode: vertical-rl; transform: rotate(180deg); font-size: 7px; white-space: nowrap; }
.sbody { flex: 1; min-width: 0; display: flex; flex-direction: column; padding: 12px 9px 4px 10px; }
.sbar { display: flex; align-items: center; gap: 4px; }
.sbar .grow { flex: none; width: 154px; }
.sbar .mini { width: 13px; }
.shead { display: flex; align-items: center; gap: 9px; height: 16px; margin-top: 7px; padding-left: 4px; background: #303640; }
.shead h2 { flex: 1; font-weight: bold; }
.shead .wh { color: #d5d9dd; }
.tree { flex: 1; overflow: hidden; padding: 1px 0 0 2px; border: 1px solid #626c78; border-top: 0; white-space: nowrap; color: #dde1e5; }
.row { display: flex; align-items: center; gap: 3px; height: 12px; }
.row svg { width: 10px; height: 10px; }
.tree > ul { margin-left: 6px; padding-left: 6px; border-left: 1px dotted #65707c; }
.tree ul ul { padding-left: 13px; }
.grp { padding-bottom: 1px; }
.grp.open { position: relative; }
.grp.open::before { content: ""; position: absolute; left: -10px; top: 3px; width: 6px; height: 6px; background: linear-gradient(#555, #555) 1px 2px / 4px 1px no-repeat #e9ebed; }
mark { padding: 0 2px; background: #fff; color: #222; }

.layouts { display: flex; height: 13px; background: #2b2e36; border-top: 1px solid #22252b; font: bold 6px/12px Roboto, sans-serif; }
.layouts .nav { width: 11px; background: #343b46; }
.layouts .nav svg { width: 7px; height: 7px; }
.layouts a { min-width: 20px; padding: 0 8px; text-align: center; background: #343b46; border-right: 1px solid #23272e; }
.layouts a.on { background: #4b6586; color: #fff; }

.cmd { display: flex; height: 60px; background: #2c3034; color: #a6abb0; font: 8px/11px "DejaVu Sans Mono", monospace; }
.cgrip { width: 13px; padding: 3px 2px; background: #3c424b; }
.cgrip svg { width: 8px; height: 8px; }
.cmain { flex: 1; min-width: 0; display: flex; flex-direction: column; }
.clog { flex: 1; display: flex; border-bottom: 1px solid #62686e; }
.ctext { flex: 1; padding-top: 2px; }
.scroll { display: flex; flex-direction: column; align-items: center; width: 11px; padding: 3px 0; background: #3a4048; }
.scroll svg { width: 7px; height: 7px; }
.scroll i { width: 9px; height: 5px; margin: auto 0 3px; background: #65717d; }
.cline { display: flex; height: 14px; line-height: 14px; }
.cline input { flex: 1; border: 0; background: none; color: inherit; font: inherit; }

.props { width: 187px; padding: 0 1px; background: #434d59; border-left: 4px solid #2f353e; border-right: 1px solid #2f353e; margin-top: 1px; }
.phead { display: flex; align-items: center; justify-content: space-between; height: 14px; padding: 0 4px 0 4px; background: #4d5965; }
.phead h2 { font: bold 8px/10px "Liberation Sans", sans-serif; }
.phead svg { width: 8px; height: 8px; }
.psel { display: flex; align-items: center; gap: 2px; padding: 4px 2px 0 3px; }
.flat { flex: 1; border-width: 0 0 1px; border-color: #65707b; background: none; margin-right: 1px; }
.flat::after { right: 2px; }
.pt { width: 160px; margin: 14px 0 0 3px; border-collapse: collapse; table-layout: fixed; font: 7px/9px "Open Sans", sans-serif; color: #d7dbe0; }
.psel + .pt { margin-top: 15px; }
.pt .key { width: 60px; }
.pt th, .pt td { height: 14px; padding: 0 0 0 3px; border-bottom: 1px solid #515b67; text-align: left; font-weight: normal; white-space: nowrap; }
.pt td { padding-left: 2px; }
.pt tbody th { border-right: 1px solid #515b67; }
.pt thead th { border-bottom: 1px solid #c9ced4; font-weight: bold; color: #fff; }
.pt thead div { display: flex; align-items: center; justify-content: space-between; padding-right: 4px; }
.big-c { border-width: 4px; border-bottom: 0; }
.dim td { color: #8a939d; }
.sw { display: inline-block; width: 7px; height: 7px; margin-right: 2px; border: 1px solid #111; background: #0b2c9c; vertical-align: middle; }
.ln { display: inline-block; width: 23px; margin-right: 3px; border-top: 1px solid #b9bfc6; vertical-align: middle; }
.ln.th { width: 21px; margin-right: 2px; border-color: #fff; }

.status { display: flex; align-items: center; height: 15px; padding: 0 2px 0 6px; background: #333a45; }
.coords { width: 154px; font: 6px/10px "DejaVu Sans Mono", monospace; }
.toggles { display: flex; flex: 1; gap: 1px; }
.toggles button { width: 12px; height: 12px; }
.toggles .on { background: #3f6a8f; outline: 1px solid #6a9cc2; outline-offset: -1px; }
.toggles svg { width: 9px; height: 9px; }
.units { display: flex; align-items: center; gap: 2px; color: #9aa3ad; font: 6px/10px "DejaVu Sans Mono", monospace; }
.units svg { width: 10px; height: 10px; }
.units .caret { margin: 0 3px 0 1px; }
```
